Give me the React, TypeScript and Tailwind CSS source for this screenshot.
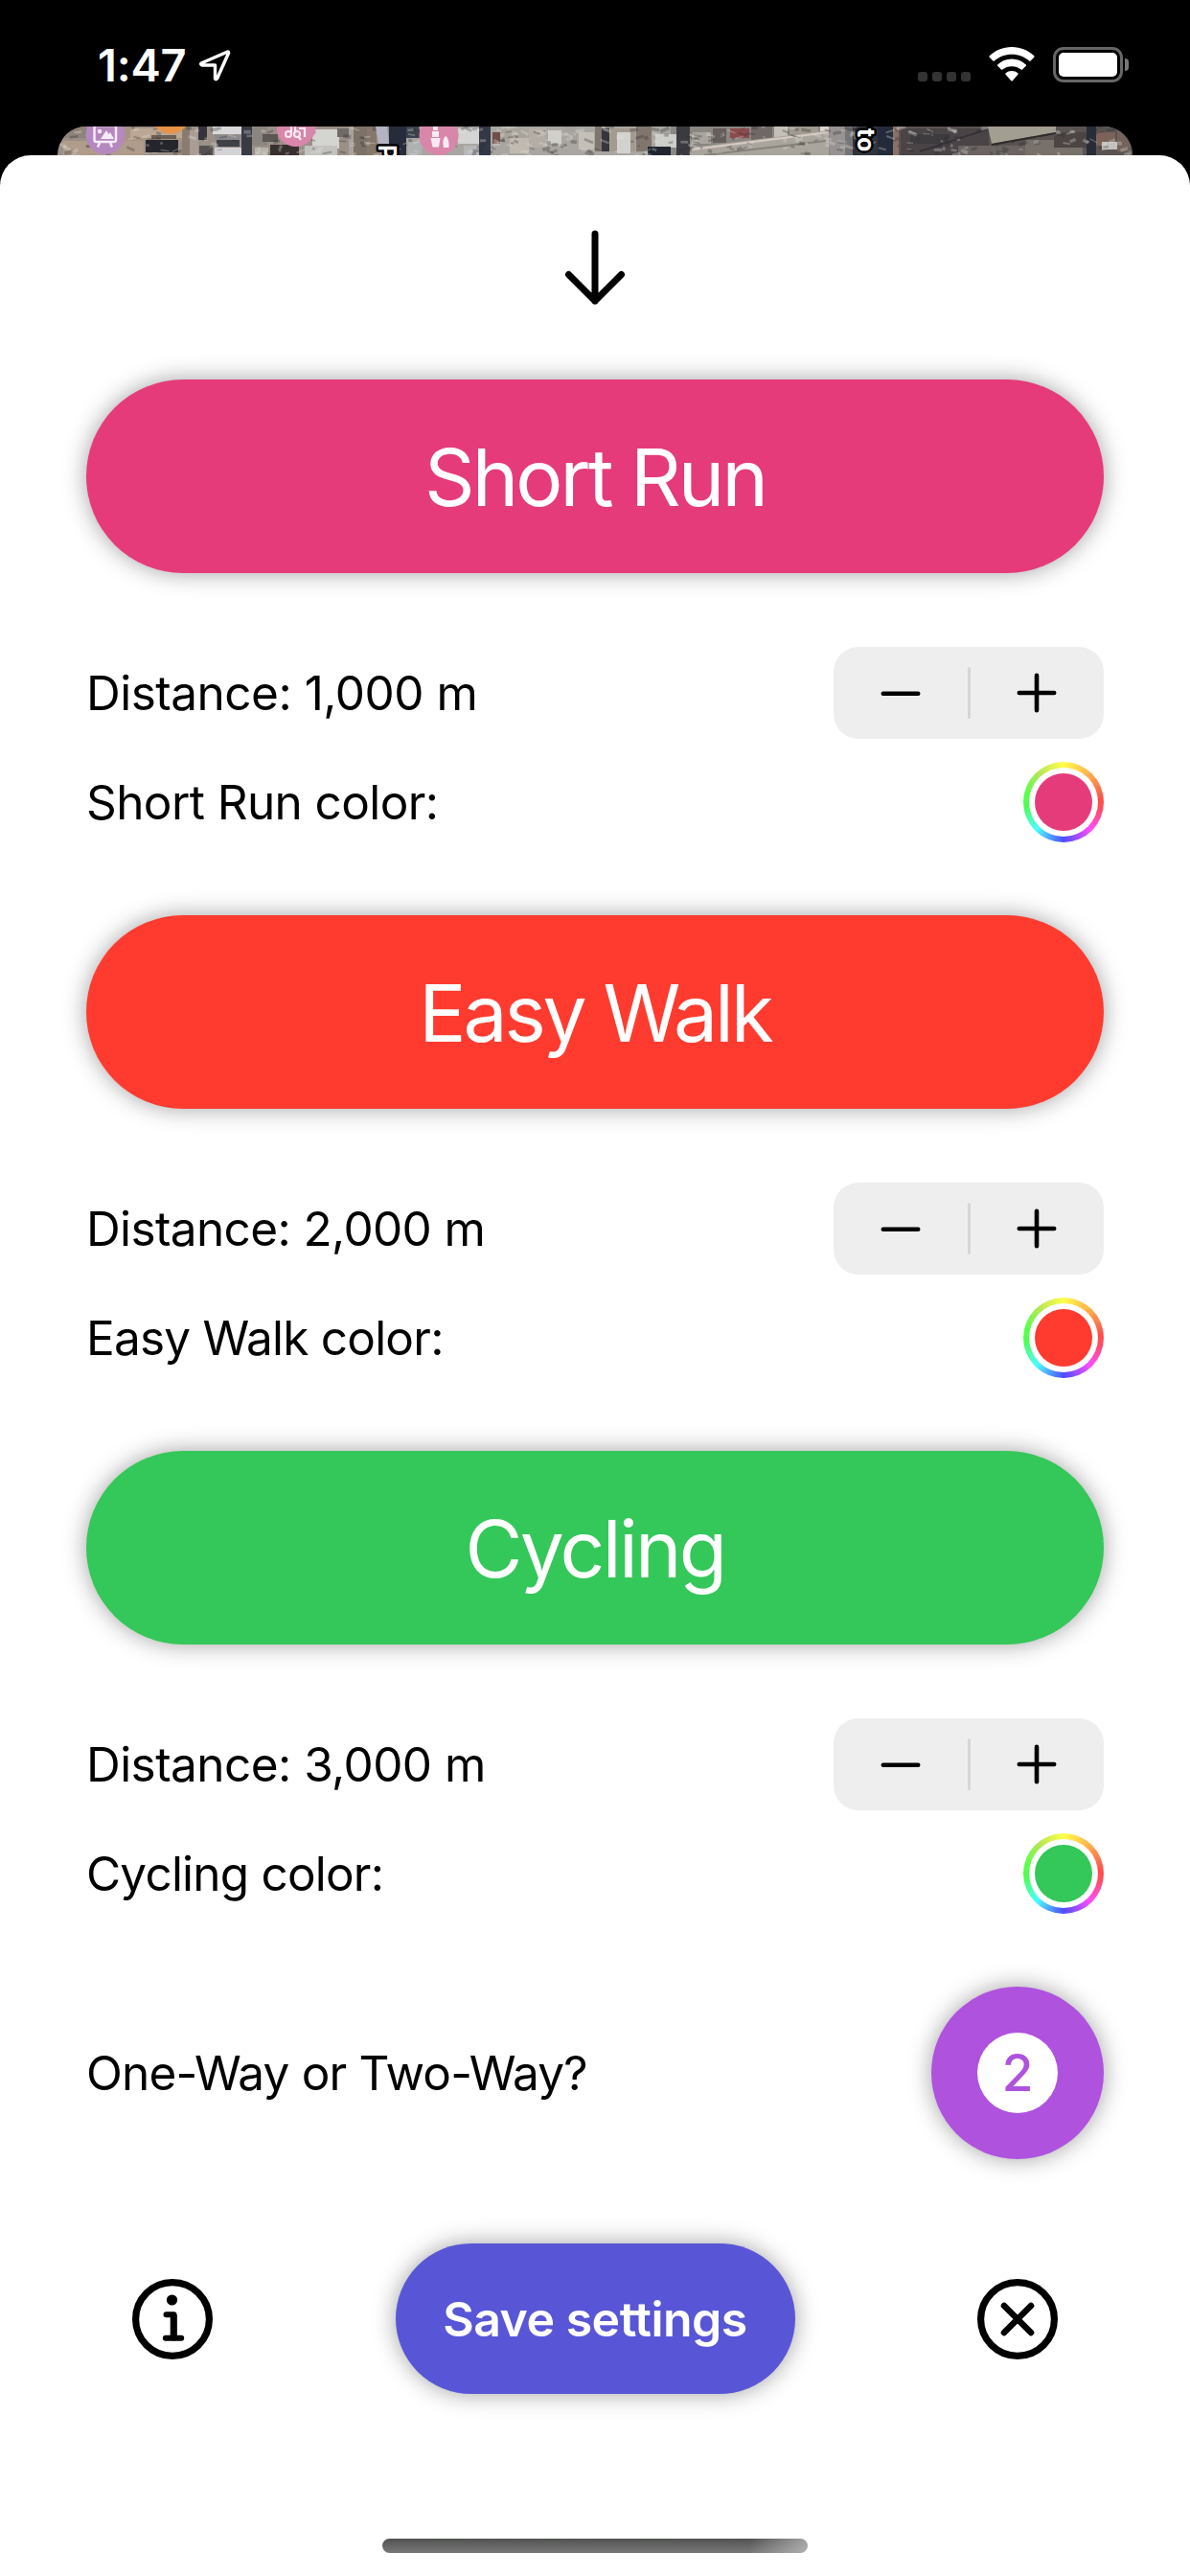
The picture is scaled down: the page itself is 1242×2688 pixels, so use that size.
import type { ReactNode } from "react";

function LocationArrow() {
  return (
    <svg className="ml-[13px] h-[34px] w-[34px]" viewBox="0 0 34 34" fill="none">
      <path d="M30.5 3 L3 15 Q2 16.6 4 17 H17.5 V31 Q18.2 32.6 19.6 31 L31.6 4.2 Q31.6 2.6 30.5 3 Z" stroke="#fff" strokeWidth="3.4" strokeLinejoin="round" />
    </svg>
  );
}

function Wifi() {
  return (
    <svg className="h-[36px] w-[48px]" viewBox="0 0 48 36" fill="#fff">
      <path d="M24 0 C33 0 41.300 3.500 47.300 9.300 Q48 10 47.300 10.800 L43.600 14.600 Q42.900 15.200 42.200 14.600 C37.300 10.200 31 7.700 24 7.700 C17 7.700 10.700 10.200 5.800 14.600 Q5.100 15.200 4.400 14.600 L0.700 10.800 Q0 10 0.700 9.300 C6.700 3.500 15 0 24 0 Z" />
      <path d="M24 12.600 C29.700 12.600 34.900 14.800 38.800 18.400 Q39.500 19.100 38.800 19.800 L35 23.600 Q34.400 24.200 33.700 23.600 C31 21.400 27.700 20.200 24 20.200 C20.300 20.200 17 21.400 14.300 23.600 Q13.600 24.200 13 23.600 L9.200 19.800 Q8.500 19.100 9.200 18.400 C13.100 14.800 18.300 12.600 24 12.600 Z" />
      <path d="M24 25 Q27.800 25 30.400 27.300 Q31.100 28 30.400 28.800 L24.800 35.200 Q24 36 23.200 35.200 L17.600 28.800 Q16.900 28 17.600 27.300 Q20.200 25 24 25 Z" />
    </svg>
  );
}

function StatusBar() {
  return (
    <div className="flex h-[132px] items-start justify-between pl-[102px] pr-[64px] text-white">
      <div className="flex items-center pt-[38px]">
        <span className="text-[47px] leading-[60px] font-semibold tracking-[-0.2px]">1:47</span>
        <LocationArrow />
      </div>
      <div className="mt-[49px] flex h-[38px] items-end">
        <div className="mb-[2px] flex gap-[5px]">
          {[0, 1, 2, 3].map((i) => (
            <span key={i} className="h-[10px] w-[10px] rounded-[3px] bg-[#333]" />
          ))}
        </div>
        <div className="mb-[2px] ml-[19px]">
          <Wifi />
        </div>
        <div className="mb-[1px] ml-[19px] h-[37px] w-[73px] rounded-[11px] border-[3px] border-[#666] p-[3px]">
          <div className="h-full w-full rounded-[5px] bg-white" />
        </div>
        <div className="mb-[13px] ml-[2px] h-[13px] w-[4px] rounded-r-full bg-[#777]" />
      </div>
    </div>
  );
}

const roofs: [number, number, number, number, string][] = [
  [60, 132, 70, 12, "#8d8379"], [66, 147, 84, 16, "#b09c8b"], [120, 133, 70, 14, "#a89482"], [136, 134, 56, 10, "#bba793"],
  [152, 146, 34, 13, "#25262b"], [158, 141, 26, 4, "#6b5f57"], [190, 132, 8, 30, "#8a7b70"], [198, 136, 9, 26, "#a99d95"],
  [207, 132, 9, 14, "#34343b"], [208, 152, 14, 10, "#55504f"], [222, 132, 30, 8, "#d9d9dc"], [224, 141, 26, 5, "#8b8a8d"],
  [226, 146, 24, 7, "#3f4146"], [224, 154, 30, 8, "#d3d3d6"], [252, 132, 11, 30, "#393b44"], [263, 132, 16, 20, "#8b857f"],
  [266, 154, 14, 8, "#b8b3ad"], [282, 151, 30, 11, "#37302e"], [274, 140, 16, 8, "#5c5654"], [326, 135, 28, 20, "#d4d4d1"],
  [318, 152, 34, 10, "#c3c2bf"], [352, 134, 12, 9, "#716b67"], [364, 132, 5, 30, "#aaa39d"], [369, 132, 14, 30, "#7d7268"],
  [383, 132, 10, 30, "#85776c"], [406, 132, 18, 30, "#262c3c"], [424, 132, 14, 12, "#3b414c"], [426, 148, 14, 14, "#aeb2b2"],
  [478, 134, 22, 16, "#d3d4d3"], [484, 152, 16, 10, "#b5b7b8"], [500, 132, 12, 30, "#333848"], [514, 138, 8, 12, "#714d49"],
  [524, 133, 24, 12, "#a9a39a"], [532, 144, 20, 16, "#c1bab0"], [552, 134, 18, 20, "#b4ada5"], [572, 136, 14, 14, "#d0cfca"],
  [590, 132, 12, 16, "#a6a19c"], [604, 138, 16, 18, "#c4bfb7"], [621, 132, 7, 26, "#7d766f"], [628, 134, 8, 24, "#35353b"],
  [637, 134, 26, 24, "#a39a90"], [644, 138, 14, 22, "#d2d3cf"], [664, 132, 16, 26, "#80766d"], [684, 140, 24, 14, "#cdcdc9"],
  [676, 153, 24, 9, "#1f2631"], [706, 132, 14, 30, "#3b3a41"], [722, 138, 20, 12, "#aaa59e"], [744, 134, 14, 15, "#655e5c"],
  [762, 134, 20, 10, "#8b4b4b"], [784, 132, 22, 16, "#6f6867"], [808, 132, 14, 14, "#c5c1b8"], [824, 132, 30, 8, "#a09a90"],
  [856, 132, 9, 28, "#ddd7d0"], [866, 132, 16, 30, "#989392"], [882, 132, 8, 30, "#777477"], [890, 132, 26, 30, "#30343d"],
  [916, 132, 16, 30, "#232a39"], [932, 132, 6, 30, "#8a7066"], [940, 134, 92, 28, "#4a4446"], [950, 140, 40, 10, "#3d3b3e"],
  [1000, 152, 70, 10, "#6b6462"], [1070, 146, 60, 16, "#77706b"], [1100, 138, 34, 16, "#4c4544"], [1134, 132, 10, 30, "#282d38"],
  [1144, 138, 20, 14, "#7b625a"], [1150, 148, 20, 8, "#c4c1bf"], [1166, 136, 14, 22, "#73635c"],
];

function hash(n: number) {
  const v = Math.sin(n * 127.1) * 43758.5453;
  return v - Math.floor(v);
}

const speckles = Array.from({ length: 420 }, (_, i) => ({
  x: 60 + hash(i + 1) * 1122,
  y: 132 + hash(i + 501) * 30,
  w: 2 + hash(i + 1001) * 8,
  h: 1 + hash(i + 1501) * 3,
  fill: hash(i + 2001) > 0.5 ? "#e6e4df" : "#2a2a30",
  turn: hash(i + 2501) * 60 - 30,
}));

function MapStrip() {
  return (
    <div className="mx-[60px] h-[30px] overflow-hidden rounded-t-[30px]">
      <svg className="block h-[30px] w-[1122px]" viewBox="60 132 1122 30">
        <rect x="60" y="132" width="1122" height="30" fill="#9b9087" />
        <rect x="420" y="132" width="280" height="30" fill="#a9a6a1" />
        <rect x="700" y="132" width="190" height="30" fill="#8a8682" />
        <rect x="938" y="132" width="244" height="30" fill="#5a5352" />
        {roofs.map(([x, y, w, h, c], i) => (
          <rect key={i} x={x} y={y} width={w} height={h} fill={c} />
        ))}
        <path d="M722 154 L865 136 V162 H722 Z" fill="#aaa59c" />
        <path d="M722 156 L865 138" stroke="#d6cbc2" strokeWidth="2" />
        <path d="M735 162 L862 147" stroke="#87827c" strokeWidth="2" />
        <path d="M960 158 L1030 135" stroke="#34323a" strokeWidth="2" />
        {speckles.map((s, i) => (
          <rect key={i} x={s.x} y={s.y} width={s.w} height={s.h} fill={s.fill} opacity="0.3" transform={`rotate(${s.turn} ${s.x} ${s.y})`} />
        ))}
        <path d="M1031 132 H1102 V138 L1035 150 Z" fill="#a39e92" />
        <path d="M1035 151 L1102 139" stroke="#2e2b2b" strokeWidth="2" />
        <path d="M392 132 H404 L406 150 H395 Z" fill="#b3b4c3" />
        <circle cx="110" cy="140.500" r="20.500" fill="#b588bf" />
        <g stroke="#f6eaf8" fill="none" strokeWidth="2.500">
          <rect x="98.500" y="131" width="22.500" height="17" rx="2" />
          <path d="M104 149 L102 153.500 M115 149 L117 153.500" />
        </g>
        <path d="M105 145 L111 136 L113.500 140 L115 138 L119 145 Z" fill="#f6eaf8" />
        <circle cx="104" cy="137" r="2.200" fill="#f6eaf8" />
        <circle cx="178" cy="119" r="20.500" fill="#e8934a" />
        <circle cx="309" cy="132.500" r="20.500" fill="#d986ab" />
        <g stroke="#faeaf2" fill="none" strokeWidth="2.200">
          <circle cx="301" cy="140" r="3" />
          <path d="M304 140 V132 M308 132 V138" />
          <circle cx="310" cy="140" r="3" />
          <path d="M311 142 L314 146 M312 134 H318 V143" />
        </g>
        <circle cx="458" cy="141.500" r="20.500" fill="#d986ab" />
        <g fill="#faeaf2">
          <path d="M452 132 H457 V136 H452 Z M451 137 H458 V143 H451 Z M449.500 144 H459.500 L458 153.500 H451.500 Z M463 154 C461.500 146 463.500 143 465.200 142 C467 143 469 146 468.500 154 Z" />
        </g>
        <g fontFamily="Inter, sans-serif" fontWeight="700" fontSize="25" fill="#fff" stroke="#000" strokeWidth="5" paintOrder="stroke" strokeLinejoin="round">
          <text transform="translate(395 151) rotate(90)">P</text>
          <text transform="translate(895 134) rotate(90)">to</text>
        </g>
      </svg>
    </div>
  );
}

function Stepper() {
  return (
    <div className="flex h-[96px] w-[282px] items-center rounded-[26px] bg-[#eeeeee]">
      <button className="flex flex-1 justify-center" aria-label="Decrease">
        <svg className="h-[42px] w-[42px]" viewBox="0 0 42 42" stroke="#000" strokeWidth="4.600" strokeLinecap="round">
          <path d="M2.800 21.800 H39.200" />
        </svg>
      </button>
      <span className="h-[54px] w-[3px] rounded-full bg-[#d6d6d6]" />
      <button className="flex flex-1 justify-center" aria-label="Increase">
        <svg className="h-[42px] w-[42px]" viewBox="0 0 42 42" stroke="#000" strokeWidth="4.600" strokeLinecap="round">
          <path d="M2.800 21 H39.200 M21 2.800 V39.200" />
        </svg>
      </button>
    </div>
  );
}

function ColorWell({ fill }: { fill: string }) {
  return (
    <button
      aria-label="Pick color"
      className="h-[84px] w-[84px] rounded-full bg-[conic-gradient(#ffff4d_0deg,#ffab4d_45deg,#ff4d4d_85deg,#ff4d5e_100deg,#ff4dff_135deg,#4d4dff_180deg,#4dffff_225deg,#4dff4d_265deg,#5cff4d_285deg,#b5e655_320deg,#ffff4d_360deg)] p-[6px]"
    >
      <div className="h-full w-full rounded-full bg-white p-[6px]">
        <div className={`h-full w-full rounded-full ${fill}`} />
      </div>
    </button>
  );
}

function Label({ children, className }: { children: ReactNode; className: string }) {
  return <span className={`text-[49.5px] leading-[60px] whitespace-nowrap ${className}`}>{children}</span>;
}

const activities = [
  { name: "Short Run", distance: "1,000", fill: "bg-[#e63b7a]", title: "tracking-[-2.9px]", dist: "tracking-[-0.5px]", label: "tracking-[-0.6px]" },
  { name: "Easy Walk", distance: "2,000", fill: "bg-[#ff3b30]", title: "tracking-[-3.1px]", dist: "tracking-[-0.62px]", label: "tracking-[-0.78px]" },
  { name: "Cycling", distance: "3,000", fill: "bg-[#34c759]", title: "tracking-[-2.7px]", dist: "tracking-[-0.55px]", label: "tracking-[-0.8px]" },
];

export default function App() {
  return (
    <div className="flex h-[2688px] w-[1242px] flex-col overflow-hidden bg-black font-['Inter','Liberation_Sans',sans-serif] text-black">
      <StatusBar />
      <MapStrip />
      <main className="flex flex-1 flex-col rounded-t-[32px] bg-white px-[90px]">
        <button className="mt-[78px] flex h-[79px] justify-center" aria-label="Close sheet">
          <svg className="h-[79px] w-[64px]" viewBox="0 0 64 79" fill="none" stroke="#000" strokeWidth="7" strokeLinecap="round" strokeLinejoin="round">
            <path d="M32 4 V74 M4.500 46.500 L32 74 L59.500 46.500" />
          </svg>
        </button>
        <div className="mt-[77px] flex flex-col gap-[76px]">
          {activities.map((a) => (
            <section key={a.name} className="flex flex-col">
              <button className={`h-[202px] rounded-[101px] pt-[3px] text-[82px] leading-none text-white shadow-[0_0_25px_rgba(0,0,0,0.37)] ${a.fill} ${a.title}`}>
                {a.name}
              </button>
              <div className="mt-[77px] flex h-[96px] items-center justify-between">
                <Label className={a.dist}>Distance: {a.distance} m</Label>
                <Stepper />
              </div>
              <div className="mt-[24px] flex h-[84px] items-center justify-between">
                <Label className={a.label}>{a.name} color:</Label>
                <ColorWell fill={a.fill} />
              </div>
            </section>
          ))}
        </div>
        <div className="mt-[76px] flex h-[180px] items-center justify-between">
          <Label className="tracking-[-0.82px]">One-Way or Two-Way?</Label>
          <button className="flex h-[180px] w-[180px] items-center justify-center rounded-full bg-[#af52de] shadow-[0_0_25px_rgba(0,0,0,0.37)]">
            <span className="flex h-[84px] w-[84px] items-center justify-center rounded-full bg-white text-[53px] leading-none font-medium text-[#af52de]">2</span>
          </button>
        </div>
        <div className="mt-[88px] flex h-[157px] items-center justify-between px-[48px]">
          <button aria-label="Info">
            <svg className="h-[84px] w-[84px]" viewBox="0 0 84 84" fill="none" stroke="#000" strokeLinecap="round" strokeLinejoin="round">
              <circle cx="42" cy="42" r="38.400" strokeWidth="7.200" />
              <circle cx="41.500" cy="22" r="5.600" fill="#000" stroke="none" />
              <path d="M35.500 37.300 H43.500 V61.500" strokeWidth="6" />
              <path d="M43.200 37.300 V61.500" strokeWidth="7" strokeLinecap="butt" />
              <path d="M34.800 61.700 H51.200" strokeWidth="6" />
            </svg>
          </button>
          <button className="h-[157px] w-[417px] rounded-[78.5px] bg-[#5856d6] pt-px text-[50px] leading-none font-semibold tracking-[-0.5px] text-white shadow-[0_0_25px_rgba(0,0,0,0.37)]">
            Save settings
          </button>
          <button aria-label="Cancel">
            <svg className="h-[84px] w-[84px]" viewBox="0 0 84 84" fill="none" stroke="#000" strokeLinecap="round">
              <circle cx="42" cy="42" r="38.400" strokeWidth="7.200" />
              <path d="M28 28 L56 56 M56 28 L28 56" strokeWidth="6.600" />
            </svg>
          </button>
        </div>
        <div className="mt-auto mb-[24px] h-[15px] w-[444px] self-center rounded-full bg-[linear-gradient(100deg,transparent_86%,rgba(200,200,200,0.7)_100%),linear-gradient(#505250,#787878)]" />
      </main>
    </div>
  );
}
